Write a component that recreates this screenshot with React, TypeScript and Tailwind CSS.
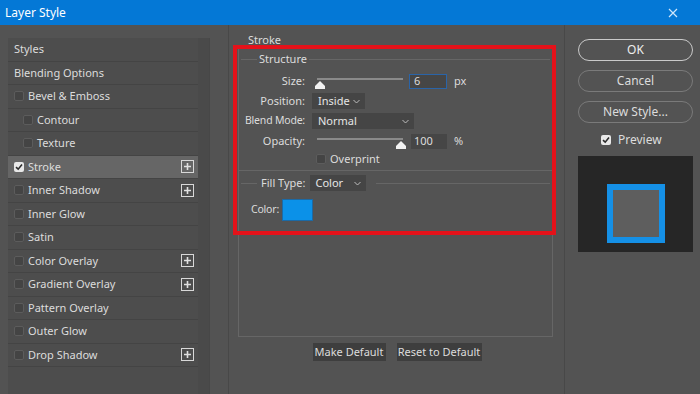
import React from 'react'

type Item = { label: string; check?: boolean; checked?: boolean; indent?: boolean; plus?: boolean; active?: boolean }

const items: Item[] = [
    { label: 'Styles' },
    { label: 'Blending Options' },
    { label: 'Bevel & Emboss', check: true },
    { label: 'Contour', check: true, indent: true },
    { label: 'Texture', check: true, indent: true },
    { label: 'Stroke', check: true, checked: true, plus: true, active: true },
    { label: 'Inner Shadow', check: true, plus: true },
    { label: 'Inner Glow', check: true },
    { label: 'Satin', check: true },
    { label: 'Color Overlay', check: true, plus: true },
    { label: 'Gradient Overlay', check: true, plus: true },
    { label: 'Pattern Overlay', check: true },
    { label: 'Outer Glow', check: true },
    { label: 'Drop Shadow', check: true, plus: true },
]

function Check({ checked }: { checked?: boolean }) {
    return checked ? (
        <span className="w-[10px] h-[10px] rounded-[2px] bg-[#e8e8e8] flex items-center justify-center">
            <svg width="8" height="8" viewBox="0 0 8 8">
                <path d="M1 4.2 L3.2 6.2 L7 1.6" stroke="#2b2b2b" strokeWidth="1.6" fill="none" />
            </svg>
        </span>
    ) : (
        <span className="w-[10px] h-[10px] rounded-[2px] bg-[#444] border border-[#5c5c5c]" />
    )
}

function Plus() {
    return (
        <span className="w-[13px] h-[13px] border border-[#d8d8d8] flex items-center justify-center">
            <svg width="9" height="9" viewBox="0 0 9 9">
                <path d="M4.5 1 V8 M1 4.5 H8" stroke="#e0e0e0" strokeWidth="1.6" />
            </svg>
        </span>
    )
}

function Chevron() {
    return (
        <svg width="7" height="5" viewBox="0 0 7 5">
            <path d="M0.5 1 L3.5 4 L6.5 1" stroke="#bdbdbd" strokeWidth="1" fill="none" />
        </svg>
    )
}

function Slider({ pos }: { pos: number }) {
    return (
        <div className="relative w-[86px] h-[20px]">
            <div className="absolute left-0 right-0 top-[7px] h-[2px] bg-[#8a8a8a]" />
            <svg className="absolute top-[10px]" style={{ left: pos - 5 }} width="10" height="8" viewBox="0 0 10 8">
                <path d="M5 0 L10 5 V8 H0 V5 Z" fill="#f2f2f2" />
            </svg>
        </div>
    )
}

export default function App() {
    return (
        <div className="w-[700px] h-[394px] bg-[#535353] flex flex-col overflow-hidden text-[#dcdcdc] text-[11px]" style={{ fontFamily: '"Noto Sans", "Open Sans", sans-serif' }}>
            {/* Title bar */}
            <div className="h-[25px] bg-[#0478d6] flex items-center justify-between pl-[5px] pr-[22px] text-white text-[12px]">
                <span>Layer Style</span>
                <svg width="10" height="10" viewBox="0 0 10 10">
                    <path d="M1 1 L9 9 M9 1 L1 9" stroke="#cfe6fb" strokeWidth="1.2" />
                </svg>
            </div>

            <div className="flex flex-1">
                {/* Left list */}
                <div className="w-[228px] flex pt-[13px] pl-[8px]">
                    <div className="w-[190px] flex flex-col">
                        {items.map((it) => (
                            <div
                                key={it.label}
                                className={`h-[23.5px] flex items-center border-b border-[#444] pr-[4px] ${it.active ? 'bg-[#666]' : 'bg-[#4d4d4d]'} ${it.indent ? 'pl-[15px]' : 'pl-[6px]'}`}
                            >
                                {it.check && <Check checked={it.checked} />}
                                <span className={`${it.check ? 'ml-[4px]' : ''} flex-1`}>{it.label}</span>
                                {it.plus && <Plus />}
                            </div>
                        ))}
                        <div className="flex-1 bg-[#4d4d4d]" />
                    </div>
                    <div className="w-[12px] bg-[#4a4a4a] border-r border-[#474747]" />
                </div>

                {/* Middle panel */}
                <div className="relative w-[337px] border-x border-[#484848] pt-[9px] pl-[9px] pr-[11px] flex flex-col">
                    <div className="pl-[10px] h-[12px] leading-[12px]">Stroke</div>
                    <div className="mt-[1px] border border-[#666] h-[290px] flex flex-col px-[2px]">
                        {/* Structure */}
                        <div className="flex items-center h-[20px] mt-[1px]">
                            <div className="w-[16px] h-px bg-[#666]" />
                            <span className="px-[2px]">Structure</span>
                            <div className="flex-1 h-px bg-[#666]" />
                        </div>
                        <div className="flex flex-col mt-[2px] whitespace-nowrap">
                            <div className="flex items-center h-[20px]">
                                <span className="w-[64px] text-right">Size:</span>
                                <div className="ml-[12px]"><Slider pos={3} /></div>
                                <div className="ml-[6px] w-[38px] h-[15px] bg-[#464646] border border-[#2a64a8] flex items-center pl-[4px]">6</div>
                                <span className="ml-[7px]">px</span>
                            </div>
                            <div className="flex items-center h-[20px]">
                                <span className="w-[64px] text-right">Position:</span>
                                <div className="ml-[7px] w-[53px] h-[16px] bg-[#454545] flex items-center justify-between pl-[6px] pr-[5px]">
                                    <span className="text-[#e6e6e6]">Inside</span>
                                    <Chevron />
                                </div>
                            </div>
                            <div className="flex items-center h-[20px]">
                                <span className="w-[64px] text-right text-[10.5px] tracking-[-0.2px]">Blend Mode:</span>
                                <div className="ml-[7px] w-[102px] h-[16px] bg-[#454545] flex items-center justify-between pl-[6px] pr-[5px]">
                                    <span className="text-[#e6e6e6]">Normal</span>
                                    <Chevron />
                                </div>
                            </div>
                            <div className="flex items-center h-[20px]">
                                <span className="w-[64px] text-right">Opacity:</span>
                                <div className="ml-[12px]"><Slider pos={84} /></div>
                                <div className="ml-[8px] w-[36px] h-[15px] bg-[#464646] flex items-center pl-[3px]">100</div>
                                <span className="ml-[7px]">%</span>
                            </div>
                            <div className="flex items-center h-[16px] pl-[75px]">
                                <Check />
                                <span className="ml-[4px]">Overprint</span>
                            </div>
                        </div>
                        <div className="h-px bg-[#666] mt-[3px] -mx-[2px]" />
                        {/* Fill Type */}
                        <div className="flex items-center h-[20px] mt-[2px]">
                            <div className="w-[16px] h-px bg-[#666]" />
                            <span className="px-[4px]">Fill Type:</span>
                            <div className="w-[56px] h-[16px] bg-[#454545] flex items-center justify-between pl-[6px] pr-[5px]">
                                <span className="text-[#e6e6e6]">Color</span>
                                <Chevron />
                            </div>
                            <div className="ml-[10px] flex-1 h-px bg-[#666]" />
                        </div>
                        <div className="flex items-center mt-[6px] pl-[10px]">
                            <span className="text-[10.5px] tracking-[-0.2px]">Color:</span>
                            <div className="ml-[3px] w-[31px] h-[22px] bg-[#0b91e8] border border-[#1b6aa6]" />
                        </div>
                    </div>
                    <div className="flex justify-center gap-[11px] mt-[6px] pl-[3px]">
                        <div className="w-[73px] h-[18px] bg-[#3e3e3e] flex items-center justify-center">Make Default</div>
                        <div className="w-[85px] h-[18px] bg-[#3e3e3e] flex items-center justify-center">Reset to Default</div>
                    </div>

                    {/* Red annotation */}
                    <div className="absolute left-[4px] top-[20px] w-[323px] h-[190px] border-[4px] border-[#e4121a]" />
                </div>

                {/* Right panel */}
                <div className="flex-1 pt-[14px] pl-[13px] pr-[7px] flex flex-col">
                    <div className="h-[22px] rounded-full border border-[#c9c9c9] flex items-center justify-center text-[12px] text-[#eee]">OK</div>
                    <div className="mt-[9px] h-[22px] rounded-full border border-[#7a7a7a] flex items-center justify-center text-[12px]">Cancel</div>
                    <div className="mt-[9px] h-[22px] rounded-full border border-[#7a7a7a] flex items-center justify-center text-[12px]">New Style...</div>
                    <div className="mt-[9px] flex items-center pl-[23px] h-[16px] text-[12px]">
                        <Check checked />
                        <span className="ml-[7px]">Preview</span>
                    </div>
                    <div className="mt-[8px] w-[115px] h-[96px] bg-[#262626] flex justify-center pt-[28px]">
                        <div className="w-[58px] h-[59px] border-[6px] border-[#1590e6] bg-[#5e5e5e]" />
                    </div>
                </div>
            </div>
        </div>
    )
}
